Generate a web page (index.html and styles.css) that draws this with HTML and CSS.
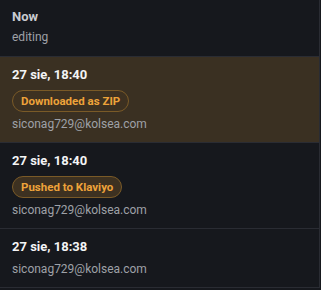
FILE: index.html
```html
<!DOCTYPE html>
<html>
<head>
<meta charset="utf-8">
<link rel="stylesheet" href="styles.css">
</head>
<body>
<div class="panel">
  <div class="row current">
    <div class="title dim">Now</div>
    <div class="sub">editing</div>
  </div>
  <div class="row active">
    <div class="title">27 sie, 18:40</div>
    <span class="badge">Downloaded as ZIP</span>
    <div class="sub">siconag729@kolsea.com</div>
  </div>
  <div class="row">
    <div class="title">27 sie, 18:40</div>
    <span class="badge">Pushed to Klaviyo</span>
    <div class="sub">siconag729@kolsea.com</div>
  </div>
  <div class="row">
    <div class="title">27 sie, 18:38</div>
    <div class="sub">siconag729@kolsea.com</div>
  </div>
</div>
</body>
</html>
```
FILE: styles.css
```css
html, body {
  margin: 0;
  padding: 0;
  background: #16181d;
}
body {
  font-family: Roboto, "Noto Sans", sans-serif;
  width: 321px;
  height: 290px;
  overflow: hidden;
}
.panel {
  width: 319px;
  border-right: 1px solid #2a2c33;
  display: flex;
  flex-direction: column;
}
.row {
  display: flex;
  flex-direction: column;
  align-items: flex-start;
  padding: 9px 12px 9px;
  border-bottom: 1px solid #2a2c33;
  gap: 4px;
}
.row.current {
  padding: 8px 12px 10px;
  gap: 2px;
}
.row.active {
  background: #3a3022;
}
.title {
  font-size: 13px;
  font-weight: 700;
  line-height: 18px;
  color: #f4f4f5;
}
.title.dim {
  color: #c9cbd0;
}
.sub {
  font-size: 12px;
  line-height: 18px;
  color: #9ea1a7;
}
.badge {
  display: inline-block;
  margin: 2px 0 -1px;
  height: 20px;
  line-height: 20px;
  padding: 0 8px;
  border: 1px solid #7a5a27;
  border-radius: 11px;
  background: #3d3121;
  color: #eea33a;
  font-size: 11.5px;
  font-weight: 700;
}
```
